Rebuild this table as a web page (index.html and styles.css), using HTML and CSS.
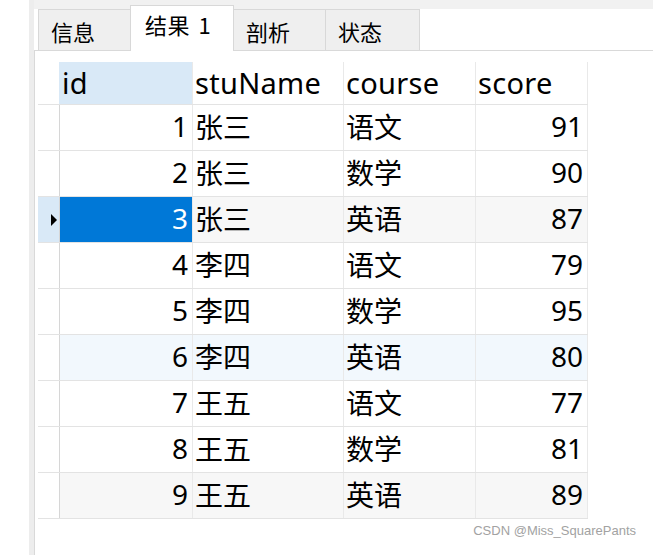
FILE: index.html
```html
<!DOCTYPE html>
<html lang="zh-CN">
<head>
<meta charset="utf-8">
<title>结果</title>
<link rel="stylesheet" href="styles.css">
</head>
<body>
<div class="app">
  <div class="tabbar">
    <div class="tab w93">信息</div>
    <div class="tab active">结果 1</div>
    <div class="tab w93">剖析</div>
    <div class="tab w95">状态</div>
  </div>
  <div class="panel">
    <div class="grid">
      <div class="row head">
        <div class="rh"></div>
        <div class="c hsel">id</div>
        <div class="c">stuName</div>
        <div class="c">course</div>
        <div class="c">score</div>
      </div>
      <div class="row"><div class="rh"></div><div class="c num">1</div><div class="c">张三</div><div class="c">语文</div><div class="c num">91</div></div>
      <div class="row"><div class="rh"></div><div class="c num">2</div><div class="c">张三</div><div class="c">数学</div><div class="c num">90</div></div>
      <div class="row alt"><div class="rh cur"></div><div class="c num sel">3</div><div class="c">张三</div><div class="c">英语</div><div class="c num">87</div></div>
      <div class="row"><div class="rh"></div><div class="c num">4</div><div class="c">李四</div><div class="c">语文</div><div class="c num">79</div></div>
      <div class="row"><div class="rh"></div><div class="c num">5</div><div class="c">李四</div><div class="c">数学</div><div class="c num">95</div></div>
      <div class="row hover"><div class="rh"></div><div class="c num">6</div><div class="c">李四</div><div class="c">英语</div><div class="c num">80</div></div>
      <div class="row"><div class="rh"></div><div class="c num">7</div><div class="c">王五</div><div class="c">语文</div><div class="c num">77</div></div>
      <div class="row"><div class="rh"></div><div class="c num">8</div><div class="c">王五</div><div class="c">数学</div><div class="c num">81</div></div>
      <div class="row alt"><div class="rh"></div><div class="c num">9</div><div class="c">王五</div><div class="c">英语</div><div class="c num">89</div></div>
    </div>
  </div>
</div>
<div class="watermark">CSDN @Miss_SquarePants</div>
</body>
</html>
```

FILE: styles.css
```css
* { box-sizing: border-box; margin: 0; padding: 0; }

body {
  width: 653px;
  height: 555px;
  overflow: hidden;
  position: relative;
  background: #ffffff;
  color: #000000;
  font-family: "Noto Sans", "Noto Sans CJK SC", sans-serif;
}

.app {
  margin-left: 29px;
  height: 555px;
  padding-left: 5px;
  background: #ededed;
  display: flex;
  flex-direction: column;
}

.tabbar {
  height: 51px;
  flex: none;
  display: flex;
  align-items: flex-end;
  padding-left: 4px;
  background: linear-gradient(#f1f1f1 9px, #ffffff 9px);
  border-bottom: 1px solid #d9d9d9;
}

.tab {
  height: 41px;
  margin-right: -1px;
  padding: 10px 0 0 12px;
  border: 1px solid #d8d8d8;
  border-bottom: none;
  background: #efefef;
  font-family: "Noto Sans CJK SC", sans-serif;
  font-size: 22px;
  line-height: 22px;
  white-space: nowrap;
}

.w93 { width: 93px; }
.w95 { width: 95px; }

.tab.active {
  width: 104px;
  height: 46px;
  margin-bottom: -1px;
  padding: 7px 0 0 14px;
  background: #ffffff;
  word-spacing: 3px;
  letter-spacing: 0.5px;
}

.panel {
  flex: 1;
  background: #ffffff;
  border-left: 1px solid #d9d9d9;
  padding: 11px 0 0 3px;
}

.grid {
  width: 550px;
}

.row {
  display: grid;
  grid-template-columns: 22px 133px 151px 132px 112px;
  height: 46px;
  border-bottom: 1px solid #e3e3e3;
}

.row.head {
  height: 43px;
}

.rh {
  display: flex;
  align-items: center;
  border-right: 1px solid #d6d6d6;
}

.head .rh {
  border-right-color: #d9e9f7;
}

.c {
  display: flex;
  align-items: center;
  padding: 0 2px 3px 2px;
  border-right: 1px solid #e9e9e9;
  font-size: 28px;
  white-space: nowrap;
}

.head .c {
  font-size: 29px;
  letter-spacing: 0.3px;
  padding-bottom: 2px;
}

.num {
  justify-content: flex-end;
  padding-right: 4px;
}

.hsel {
  background: #d9e9f7;
}

.row.alt .c {
  background: #f7f7f7;
}

.row.hover .c {
  background: #f2f8fd;
}

.row .c.sel {
  background: #0078d7;
  color: #ffffff;
}

.rh.cur {
  background: #d9e9f7;
}

.rh.cur::after {
  content: "";
  margin-left: 13px;
  border-left: 6px solid #000000;
  border-top: 6px solid transparent;
  border-bottom: 6px solid transparent;
}

.watermark {
  position: absolute;
  right: 17px;
  top: 523px;
  font-family: "Liberation Sans", Arial, sans-serif;
  font-size: 13px;
  color: #a2a2a2;
  white-space: nowrap;
}
```
